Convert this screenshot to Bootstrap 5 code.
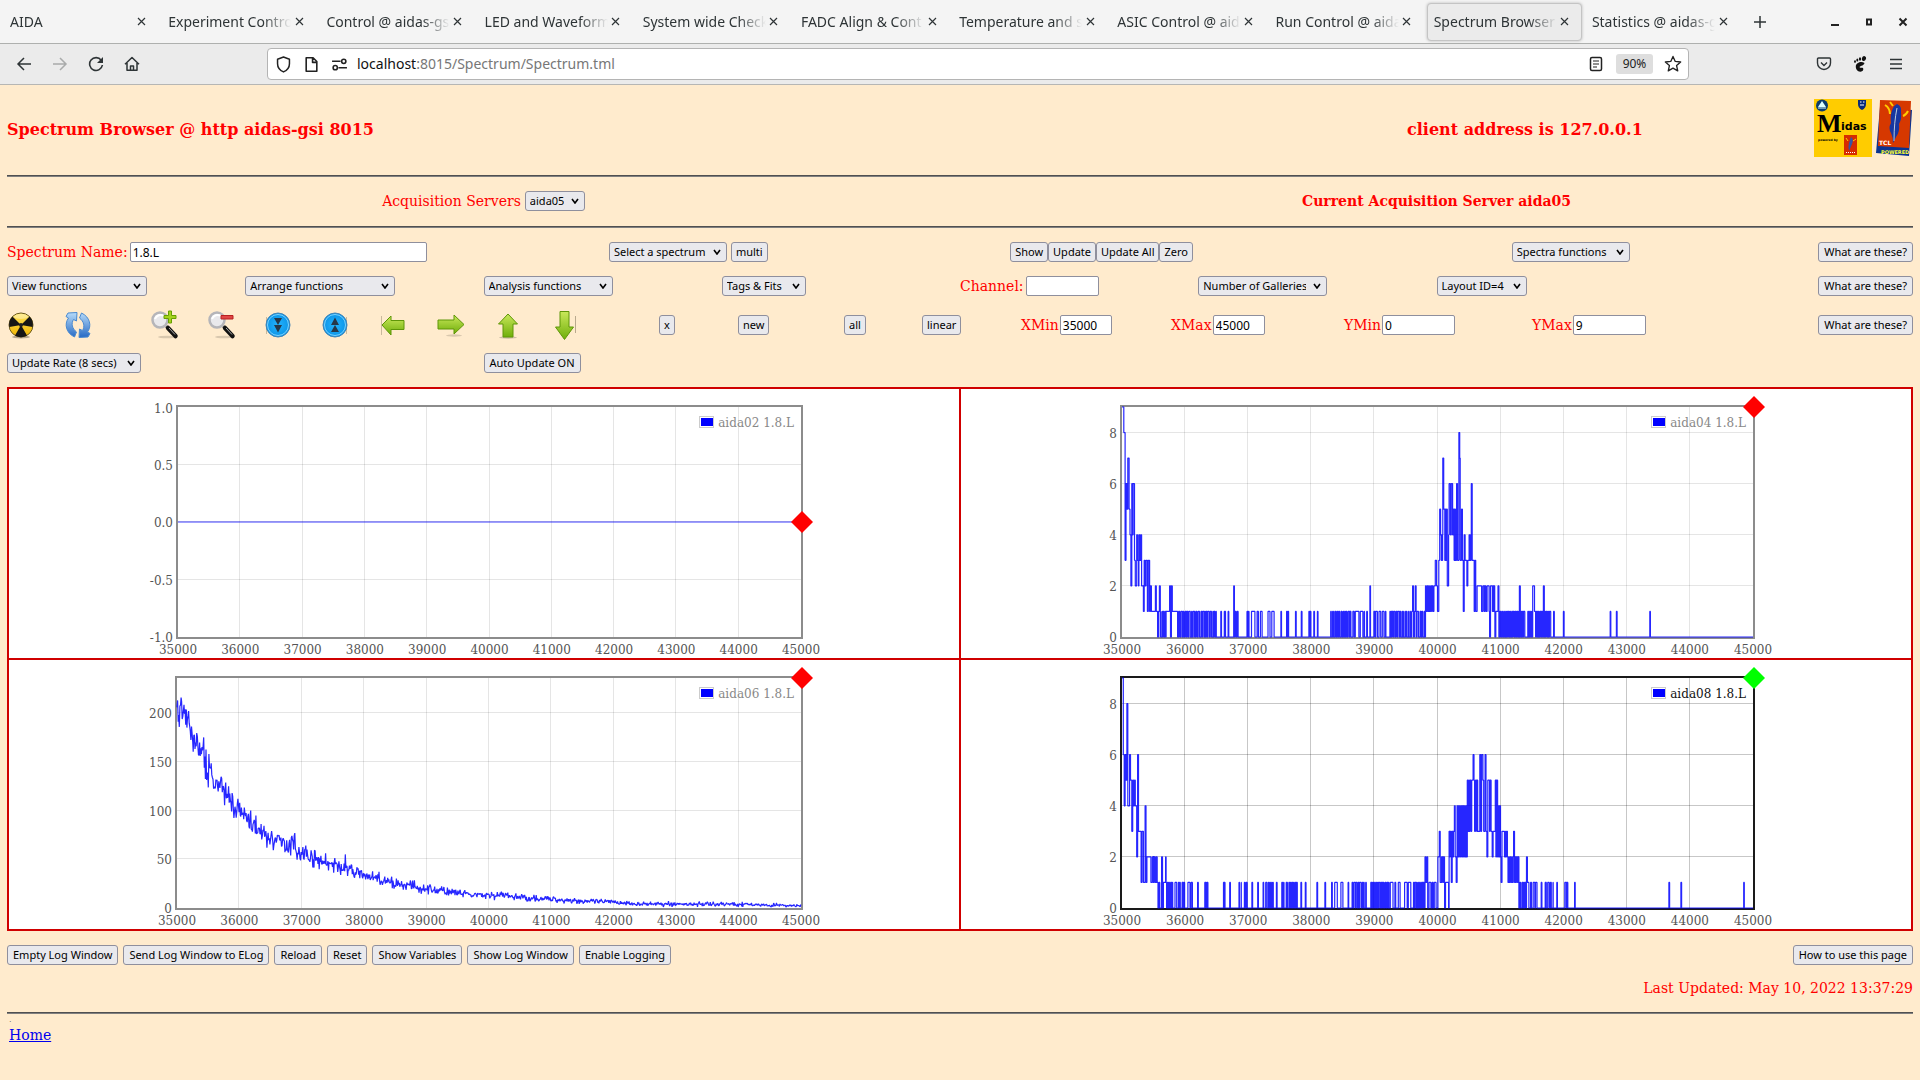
<!DOCTYPE html>
<html lang="en">
<head>
<meta charset="utf-8">
<meta name="viewport" content="width=device-width, initial-scale=1">
<title>Spectrum Browser @ aidas-gsi</title>
<link href="https://cdn.jsdelivr.net/npm/bootstrap@5.3.0/dist/css/bootstrap.min.css" rel="stylesheet">
<style>
  :root { --ui: "Noto Sans", "Open Sans", sans-serif; --serif: "DejaVu Serif", serif; }
  body { background: #ffebcd; font-family: var(--serif); font-size: 14px; line-height: 20px; color: #f00; min-height: 100vh; }
  button, select, input { font-family: var(--ui); }

  /* browser chrome */
  .tabstrip { height: 44px; background: #f4f4f4; border-bottom: 1px solid #aeb0ae; color: #2e3436; font: 14px/20px var(--ui); }
  .tabs-area { flex: 0 1 1740px; min-width: 0; }
  .btab { flex: 1 1 0; min-width: 0; height: 38px; margin: 0 0 0 3px; padding: 0 8px 0 6px; border: 1px solid transparent; border-radius: 4px; }
  .btab.current { background: #ebebeb; border-color: #c4c4c4; box-shadow: 0 0 3px rgba(0,0,0,.25); }
  .btab-text { flex: 1 1 0; min-width: 0; overflow: hidden; white-space: nowrap; -webkit-mask-image: linear-gradient(to left, transparent, #000 28px); mask-image: linear-gradient(to left, transparent, #000 28px); }
  .bare { background: none; border: 0; padding: 0; color: inherit; display: inline-flex; align-items: center; justify-content: center; }
  .bare svg { display: block; }
  .close-x { width: 16px; height: 20px; flex: none; }
  .win-btn { width: 18px; height: 20px; } .new-tab { width: 24px; height: 24px; } .url-btn { width: 24px; height: 24px; }
  .toolbar { height: 41px; background: #ebebeb; border-bottom: 1px solid #b6b6b4; color: #2e3436; }
  .nav-area { width: 267px; padding-left: 14px; gap: 16px; }
  .nav-area .bare, .ext-area .bare { width: 20px; height: 20px; }
  .urlbox { flex: 1 1 0; min-width: 0; height: 32px; background: #fff; border: 1px solid #b4b4b4; border-radius: 4px; padding: 0 3px 0 7px; }
  .url-icons { gap: 11px; margin-right: 9px; }
  .url-field { position: relative; flex: 1 1 0; min-width: 0; font: 14px/20px var(--ui); color: #777; white-space: nowrap; overflow: hidden; }
  .url-field b { font-weight: 400; color: #111; }
  .zoom-level { background: #dedede; border: 0; border-radius: 3px; font-size: 12px; line-height: 20px; width: 37px; padding: 0; color: #222; text-align: center; }
  .ext-area { width: 231px; padding-right: 14px; gap: 16px; }

  /* page */
  .page-body { padding: 0 7px; }
  .page-body hr { margin: 0; border: 0; height: 2px; opacity: 1; background: linear-gradient(#505050 50%, #808080 50%); }
  .head { height: 90px; display: grid; grid-template-columns: 1400fr 406fr 100fr; align-items: center; }
  .head h3 { font-size: 16px; line-height: 20px; font-weight: 700; margin: 0; }
  .logos { padding-bottom: 4px; }
  .servers { height: 49px; padding-bottom: 2px; }
  .panel-rows { display: flex; flex-direction: column; gap: 14px; padding-top: 14px; }
  .line { display: grid; align-items: center; min-height: 20px; }
  .line > * { display: flex; align-items: center; white-space: nowrap; min-width: 0; }
  .line > :last-child.end { justify-content: flex-end; }
  .line label { padding-right: 2px; }
  .line-a { grid-template-columns: 6fr 4fr 5fr 3fr 1fr; }
  .line-b { grid-template-columns: repeat(8, 1fr); }
  .line-c { height: 29px; grid-template-columns: 57fr 87fr 57fr 56fr 57fr 58fr 58fr 57fr 57fr 108fr 79fr 106fr 78fr 99fr 150fr 173fr 188fr 286fr 95fr; }
  .line-c label { padding-right: 1px; }
  .btn.ctl, .form-select.ctl, .form-control.ctl { height: 20px; font: 11px/18px var(--ui); color: #000; border: 1px solid #8f8f9d; border-radius: 3px; padding: 0 4px; background-color: #e9e9ed; }
  .btn.ctl.roomy { padding: 0 5px; }
  .form-select.ctl { width: auto; padding-right: 20px; background-repeat: no-repeat; background-position: right 5px center; background-size: 8px 6px;
    background-image: url("data:image/svg+xml,%3csvg xmlns='http://www.w3.org/2000/svg' viewBox='0 0 8 6'%3e%3cpath d='M1 1l3 4 3-4' fill='none' stroke='%23000' stroke-width='1.6'/%3e%3c/svg%3e"); }
  .form-control.ctl { background: #fff; border-radius: 2px; padding: 0 2px; font-size: 12px; }
  .w-name { width: 297px !important; } .w-num { width: 73px !important; } .w-chan { width: 52px !important; }
  .form-select.s60 { width: 60px; } .form-select.s83 { width: 84px; } .form-select.s90 { width: 90px; } .form-select.s117 { width: 118px; }
  .form-select.s130 { width: 129px; } .form-select.s135 { width: 134px; } .form-select.s140 { width: 140px; } .form-select.s150 { width: 150px; }
  .tool svg { width: 30px; height: 30px; display: block; }
  .tool { margin-left: -1px; }
  .btn-line { gap: 5px; }

  .gallery { display: grid; grid-template-columns: 1fr 1fr; gap: 2px; padding: 2px; background: #d00000; border: 0; }
  .plot { background: #fff; height: 269px; min-width: 0; overflow: hidden; }
  .plot svg { display: block; width: 100%; height: 269px; font-family: var(--serif); font-size: 12px; }
  .stamp { height: 47px; padding-bottom: 2px; }
  .foot { font-size: 14px; padding-left: 2px; }
  .foot small { font-size: 8px; line-height: 11px; display: block; color: #555; height: 11px; }
  .foot a { color: #00e; }
</style>
</head>
<body>

<header>
  <div class="tabstrip d-flex align-items-center">
    <div class="tabs-area d-flex" id="tabs"></div>
    <button class="bare new-tab ms-2" aria-label="New tab"><svg width="14" height="14" viewBox="0 0 14 14"><path d="M7 1v12M1 7h12" stroke="currentColor" stroke-width="1.5"/></svg></button>
    <div class="d-flex ms-auto pe-2 gap-3">
      <button class="bare win-btn" aria-label="Minimize"><svg width="10" height="10" viewBox="0 0 10 10"><path d="M1 8h8" stroke="#222" stroke-width="2"/></svg></button>
      <button class="bare win-btn" aria-label="Restore"><svg width="10" height="10" viewBox="0 0 10 10"><path d="M3 2.500h4v5H3z" fill="none" stroke="#222" stroke-width="2"/></svg></button>
      <button class="bare win-btn" aria-label="Close window"><svg width="10" height="10" viewBox="0 0 10 10"><path d="M1.500 1.500l7 7M8.500 1.500l-7 7" stroke="#222" stroke-width="2"/></svg></button>
    </div>
  </div>
  <div class="toolbar d-flex align-items-center">
    <div class="nav-area d-flex">
      <button class="bare" aria-label="Back"><svg width="16" height="16" viewBox="0 0 16 16"><path d="M15 8H2M8 2L2 8l6 6" fill="none" stroke="#2e3436" stroke-width="1.5"/></svg></button>
      <button class="bare" aria-label="Forward"><svg width="16" height="16" viewBox="0 0 16 16"><path d="M1 8h13M8 2l6 6-6 6" fill="none" stroke="#a9abab" stroke-width="1.500"/></svg></button>
      <button class="bare" aria-label="Reload"><svg width="16" height="16" viewBox="0 0 16 16"><path d="M13.200 4.200A6.400 6.400 0 1 0 14.400 9" fill="none" stroke="#2e3436" stroke-width="1.600"/><path d="M15 1v6H9z" fill="#2e3436"/></svg></button>
      <button class="bare" aria-label="Home"><svg width="16" height="16" viewBox="0 0 16 16"><path d="M1 8.300L8 1.500l7 6.800M3 7v7.300h10V7M6.500 14v-4h3v4" fill="none" stroke="#2e3436" stroke-width="1.500" stroke-linejoin="round"/></svg></button>
    </div>
    <div class="urlbox d-flex align-items-center">
      <div class="url-icons d-flex">
        <svg width="17" height="17" viewBox="0 0 16 16"><path d="M8 1l5.600 2v4.200c0 3.800-2.400 6.300-5.600 7.800-3.200-1.500-5.600-4-5.600-7.800V3z" fill="none" stroke="#222" stroke-width="1.400" stroke-linejoin="round"/></svg>
        <svg width="17" height="17" viewBox="0 0 16 16"><path d="M3 1.700h6.500L13 5.200v9.100H3zM9 2v4h4" fill="none" stroke="#222" stroke-width="1.500" stroke-linejoin="round"/></svg>
        <svg width="17" height="17" viewBox="0 0 16 16" fill="none" stroke="#222" stroke-width="1.500"><path d="M1 5h8M7 11h8"/><circle cx="12" cy="5" r="2"/><circle cx="4" cy="11" r="2"/></svg>
      </div>
      <div class="url-field"><b>localhost</b>:8015/Spectrum/Spectrum.tml</div>
      <div class="d-flex align-items-center gap-2">
        <button class="bare url-btn" aria-label="Reader view"><svg width="16" height="16" viewBox="0 0 16 16"><rect x="2.500" y="1.500" width="11" height="13" rx="1.500" fill="none" stroke="#222" stroke-width="1.500"/><path d="M5 5h6M5 8h6M5 11h4" stroke="#222" stroke-width="1.200"/></svg></button>
        <button class="zoom-level">90%</button>
        <button class="bare url-btn" aria-label="Bookmark"><svg width="18" height="18" viewBox="0 0 16 16"><path d="M8 1.300l2 4.400 4.800.5-3.600 3.200 1 4.700L8 11.700l-4.200 2.400 1-4.700L1.200 6.200 6 5.700z" fill="none" stroke="#222" stroke-width="1.200" stroke-linejoin="round"/></svg></button>
      </div>
    </div>
    <div class="ext-area d-flex justify-content-end">
      <button class="bare" aria-label="Pocket"><svg width="16" height="16" viewBox="0 0 16 16" fill="none" stroke="#2e3436" stroke-width="1.400"><path d="M2.500 2h11q1 0 1 1v4a6.500 6.500 0 0 1-13 0V3q0-1 1-1z"/><path d="M5 6.500l3 3 3-3"/></svg></button>
      <button class="bare" aria-label="GNOME shell integration"><svg width="16" height="16" viewBox="0 0 16 16" fill="#111"><ellipse cx="11.800" cy="2.600" rx="2" ry="2.500" transform="rotate(20 12 3)"/><ellipse cx="8" cy="3" rx="1.100" ry="1.700"/><ellipse cx="5.300" cy="4" rx="1" ry="1.500"/><ellipse cx="3" cy="5.600" rx=".9" ry="1.300"/><path d="M12.500 7C9.500 4.800 4 6.500 3.800 10.300c-.2 3 2 5.600 4.700 5.400 2.400-.2 3.300-2.300 2.600-3.500-.8-1.200-2.300.2-3.300-.8C6.600 10 12 10.200 12.500 7z"/></svg></button>
      <button class="bare" aria-label="Menu"><svg width="16" height="16" viewBox="0 0 16 16"><path d="M2 3.500h12M2 8h12M2 12.500h12" stroke="#2e3436" stroke-width="1.400"/></svg></button>
    </div>
  </div>
</header>

<main class="page-body">
  <div class="head">
    <h3>Spectrum Browser @ http aidas-gsi 8015</h3>
    <h3>client address is 127.0.0.1</h3>
    <div class="logos d-flex justify-content-end gap-1">
      <svg width="58" height="58" viewBox="0 0 58 58" role="img" aria-label="Midas">
        <rect width="58" height="58" fill="#fc0"/>
        <circle cx="8" cy="6.500" r="6" fill="#0b3c6f"/><path d="M4 8l4-6 4 6z" fill="#dff"/><path d="M4 9h8" stroke="#dff"/>
        <path d="M44 1h8v4q0 4-4 6-4-2-4-6z" fill="#0a2a7a"/><path d="M46 3h1.500M49 3h1.500M46 6h4" stroke="#fff"/>
        <text x="3" y="33" font-family="Liberation Serif, serif" font-weight="700" font-size="26" fill="#000">M</text>
        <text x="27" y="31" font-family="DejaVu Sans, sans-serif" font-weight="700" font-size="11" fill="#000">idas</text>
        <text x="4" y="42" font-family="DejaVu Sans, sans-serif" font-weight="700" font-size="3" fill="#000">powered by</text>
        <rect x="30" y="36" width="13" height="20" fill="#d62c00"/><path d="M37 38q3 2 1 7l-3 7q-1-4 0-8z" fill="#3555a5"/><path d="M32 39l2 3M39 42l3-2" stroke="#fc0"/>
        <path d="M32 53.500h9" stroke="#fff" stroke-dasharray="1 1"/>
      </svg>
      <svg width="37" height="58" viewBox="0 0 37 58" role="img" aria-label="Tcl powered">
        <path d="M4 8L36 11l-3 46L0 54z" fill="#0a3390"/>
        <path d="M4 1l31 1-2 47-31-2z" fill="#d63800"/>
        <path d="M21 5q5 2 4 8 1 7-2 12 1 8-3 13l-3 6q0-6-2-10-3-5 0-10-1-8 1-12 1-5 5-7z" fill="#1737a0"/>
        <path d="M21 9q-3 14-3 33" stroke="#bcd" fill="none"/>
        <path d="M9 6q5 3 5 9M27 17q3-1 5-5M14 3l3 4" stroke="#fc0" stroke-width="2" fill="none"/>
        <text x="3" y="46" font-family="DejaVu Sans, sans-serif" font-weight="700" font-size="6" fill="#fff">TCL</text>
        <text x="5" y="55" font-family="DejaVu Sans, sans-serif" font-weight="700" font-size="5" fill="#ff3">POWERED</text>
      </svg>
    </div>
  </div>
  <hr>
  <div class="servers row g-0 align-items-center text-center">
    <div class="col d-flex justify-content-center align-items-center gap-1"><label for="srv">Acquisition Servers</label><select id="srv" class="form-select ctl s60"><option>aida05</option></select></div>
    <div class="col fw-bold">Current Acquisition Server aida05</div>
  </div>
  <hr>
  <div class="panel-rows">
    <div class="line line-a">
      <div><label for="spn">Spectrum Name:</label><input id="spn" class="form-control ctl w-name" value="1.8.L"></div>
      <div class="gap-1"><select class="form-select ctl s117" aria-label="Select a spectrum"><option>Select a spectrum</option></select><button class="btn ctl">multi</button></div>
      <div><button class="btn ctl">Show</button><button class="btn ctl">Update</button><button class="btn ctl">Update All</button><button class="btn ctl">Zero</button></div>
      <div><select class="form-select ctl s117" aria-label="Spectra functions"><option>Spectra functions</option></select></div>
      <div class="end"><button class="btn ctl roomy">What are these?</button></div>
    </div>
    <div class="line line-b">
      <div><select class="form-select ctl s140" aria-label="View functions"><option>View functions</option></select></div>
      <div><select class="form-select ctl s150" aria-label="Arrange functions"><option>Arrange functions</option></select></div>
      <div><select class="form-select ctl s130" aria-label="Analysis functions"><option>Analysis functions</option></select></div>
      <div><select class="form-select ctl s83" aria-label="Tags and fits"><option>Tags &amp; Fits</option></select></div>
      <div><label for="chn">Channel:</label><input id="chn" class="form-control ctl w-num"></div>
      <div><select class="form-select ctl s130" aria-label="Number of Galleries"><option>Number of Galleries</option></select></div>
      <div><select class="form-select ctl s90" aria-label="Layout"><option>Layout ID=4</option></select></div>
      <div class="end"><button class="btn ctl roomy">What are these?</button></div>
    </div>
    <div class="line line-c">
      <div><button class="bare tool" aria-label="Radiation"><svg viewBox="0 0 30 30"><defs>
        <linearGradient id="gy" x2="0" y2="1"><stop stop-color="#ffe45c"/><stop offset="1" stop-color="#f0b400"/></linearGradient>
        <linearGradient id="gb" x2="0" y2="1"><stop stop-color="#b8dcfa"/><stop offset="1" stop-color="#2569c4"/></linearGradient>
        <linearGradient id="gg" x2="0" y2="1"><stop stop-color="#c9e85a"/><stop offset="1" stop-color="#6fae0a"/></linearGradient>
        <radialGradient id="gc"><stop stop-color="#25b4ff"/><stop offset="1" stop-color="#0a93e6"/></radialGradient></defs>
        <ellipse cx="15" cy="27" rx="9" ry="1.500" fill="#000" opacity=".3"/><circle cx="15" cy="15" r="12" fill="url(#gy)" stroke="#6b5a1f"/>
        <path d="M15 15L3.300 17A12 12 0 0 1 6.500 6.500zM15 15l11.700 2A12 12 0 0 0 23.500 6.500zM15 15l-6 10.400a12 12 0 0 0 12 0z" fill="#161616"/><path d="M7 7a11.500 11.500 0 0 1 16 0q-8 4-16 0z" fill="#fff" opacity=".35"/><circle cx="15" cy="15" r="2" fill="#222"/></svg></button></div>
      <div><button class="bare tool" aria-label="Refresh"><svg viewBox="0 0 30 30"><path d="M11.500 27C3 23 1 14 5.500 8L3 6.500 5 3l9-.5L13.500 11 10.500 9.500c-2.500 4-1.500 9 3 12.500zM18.500 3c8.500 4 10.500 13 6 19l2.500 1.500-2 3.500-9 .5.500-8.500 3 1.500c2.500-4 1.500-9-3-12.500z" fill="url(#gb)" stroke="#4a8ad0"/></svg></button></div>
      <div><button class="bare tool" aria-label="Zoom in"><svg viewBox="0 0 30 30"><ellipse cx="17" cy="27" rx="9" ry="1.300" opacity=".15"/><path d="M16 16l3 3" stroke="#999" stroke-width="3"/><path d="M18 18l7.500 8" stroke="#111" stroke-width="4.500" stroke-linecap="round"/><path d="M19 18l6 6.500" stroke="#aaa"/><circle cx="10" cy="10" r="7.500" fill="#e9e9ec" stroke="#b5b5b9" stroke-width="2.500"/><path d="M5 9a6 6 0 0 1 9-3" stroke="#fff" stroke-width="2" fill="none"/><path d="M18.500 1h3v4.500H26v3h-4.500V13h-3V8.500H14v-3h4.500z" fill="#a5d31d" stroke="#679f00"/></svg></button></div>
      <div><button class="bare tool" aria-label="Zoom out"><svg viewBox="0 0 30 30"><ellipse cx="17" cy="27" rx="9" ry="1.300" opacity=".15"/><path d="M16 16l3 3" stroke="#999" stroke-width="3"/><path d="M18 18l7.500 8" stroke="#111" stroke-width="4.500" stroke-linecap="round"/><path d="M19 18l6 6.500" stroke="#aaa"/><circle cx="10" cy="10" r="7.500" fill="#e9e9ec" stroke="#b5b5b9" stroke-width="2.500"/><path d="M5 9a6 6 0 0 1 9-3" stroke="#fff" stroke-width="2" fill="none"/><path d="M14 5.500h12v3.500H14z" fill="#e04545" stroke="#b82020"/></svg></button></div>
      <div><button class="bare tool" aria-label="Scale down"><svg viewBox="0 0 30 30"><path d="M3.500 7v17" stroke="#c9b99d"/><circle cx="15" cy="15" r="12" fill="url(#gc)" stroke="#4685b5"/><circle cx="15" cy="15" r="10.500" fill="none" stroke="#7cd3ff"/><path d="M11 8h8l-4 7zM11 15h8l-4 7.500z" fill="#26384a"/></svg></button></div>
      <div><button class="bare tool" aria-label="Scale up"><svg viewBox="0 0 30 30"><path d="M26.500 7v17" stroke="#c9b99d"/><circle cx="15" cy="15" r="12" fill="url(#gc)" stroke="#4685b5"/><circle cx="15" cy="15" r="10.500" fill="none" stroke="#7cd3ff"/><path d="M11 15h8l-4-7.500zM11 22h8l-4-7z" fill="#26384a"/></svg></button></div>
      <div><button class="bare tool" aria-label="Left"><svg viewBox="0 0 30 30"><path d="M3.500 6v19" stroke="#c9b99d"/><path d="M4 15l9-9v4.500h13v9H13V25z" fill="url(#gg)" stroke="#5f9608"/></svg></button></div>
      <div><button class="bare tool" aria-label="Right"><svg viewBox="0 0 30 30"><ellipse cx="18" cy="25.500" rx="8" ry="1.200" opacity=".15"/><path d="M28 14.500L18 5v5H2v9h16v5z" fill="url(#gg)" stroke="#5f9608"/></svg></button></div>
      <div><button class="bare tool" aria-label="Up"><svg viewBox="0 0 30 30"><ellipse cx="15" cy="27.500" rx="9" ry="1.200" opacity=".2"/><path d="M15 4l9.500 10H20v13H10V14H5.500z" fill="url(#gg)" stroke="#5f9608"/></svg></button></div>
      <div><button class="bare tool" aria-label="Down"><svg viewBox="0 0 30 30"><path d="M25.500 6v17" stroke="#b9a98d"/><path d="M14.500 29.500L23.500 17H19V1.500h-9V17H5.500z" fill="url(#gg)" stroke="#5f9608"/></svg></button></div>
      <div><button class="btn ctl">x</button></div>
      <div><button class="btn ctl">new</button></div>
      <div><button class="btn ctl">all</button></div>
      <div><button class="btn ctl">linear</button></div>
      <div><label for="xmin">XMin</label><input id="xmin" class="form-control ctl w-chan" value="35000"></div>
      <div><label for="xmax">XMax</label><input id="xmax" class="form-control ctl w-chan" value="45000"></div>
      <div><label for="ymin">YMin</label><input id="ymin" class="form-control ctl w-num" value="0"></div>
      <div><label for="ymax">YMax</label><input id="ymax" class="form-control ctl w-num" value="9"></div>
      <div class="end"><button class="btn ctl roomy">What are these?</button></div>
    </div>
    <div class="line line-b">
      <div><select class="form-select ctl s135" aria-label="Update rate"><option>Update Rate (8 secs)</option></select></div>
      <div></div>
      <div><button class="btn ctl roomy">Auto Update ON</button></div>
    </div>
    <div class="gallery">
      <div class="plot" data-plot="0"></div><div class="plot" data-plot="1"></div>
      <div class="plot" data-plot="2"></div><div class="plot" data-plot="3"></div>
    </div>
    <div class="btn-line d-flex">
      <button class="btn ctl roomy">Empty Log Window</button><button class="btn ctl roomy">Send Log Window to ELog</button><button class="btn ctl roomy">Reload</button><button class="btn ctl roomy">Reset</button><button class="btn ctl roomy">Show Variables</button><button class="btn ctl roomy">Show Log Window</button><button class="btn ctl roomy">Enable Logging</button>
      <button class="btn ctl roomy ms-auto">How to use this page</button>
    </div>
  </div>
  <div class="stamp d-flex align-items-center justify-content-end">Last Updated: May 10, 2022 13:37:29</div>
  <hr>
  <div class="foot"><small>.</small><a href="#">Home</a></div>
</main>

<script>
const titles = ["AIDA", "Experiment Control", "Control @ aidas-gs", "LED and Waveform", "System wide Check", "FADC Align & Cont", "Temperature and st", "ASIC Control @ aid", "Run Control @ aida", "Spectrum Browser", "Statistics @ aidas-g"];
document.getElementById("tabs").innerHTML = titles.map((t, i) =>
  `<div class="btab d-flex align-items-center${i === 9 ? " current" : ""}"><span class="btab-text">${t.replace("&", "&amp;")}</span><button class="bare close-x" aria-label="Close tab"><svg width="9" height="9" viewBox="0 0 9 9"><path d="M1 1l7 7M8 1l-7 7" stroke="#2e3436" stroke-width="1.200"/></svg></button></div>`).join("");

let seed = 7;
const rnd = () => (seed = (seed * 16807) % 2147483647) / 2147483647;

/* Histogram runs. "x:v" steps to v counts at x; "a-b:lo,hi,p" alternates between lo and hi about every p units.
   "x^v" is a single spike of v. One unit is 1/1418 of the x range. */
const runs1 = "0:9 4:8 7:3 9:6 11:5 13:7 16:5 18:4 20:2 22:6 24:4 25:6 28:3 30:2 33:4 35:3 37:2 38:4 40:3 42:4 44:2 48:1 50:3 52:2 54:3 57:1 59:3 62:1 64:2 66:1 75:2 77:1 80:0 82:1 84:2 86:0 86-99:0,1,2 99:1 107:2 109:0 111:2 113:1 122-212:0,1,2.2 222^1 230-240:0,1,4 251^2 254-261:0,1,3 281^1 284^1 291-316:0,1,5 328-346:0,1,5 357^1 370^1 373^1 390^1 403^1 420^1 423^1 431^1 439^1 469-512:0,1,2 512-545:0,1,5 550^1 557^2 566-593:0,1,2.5 602-650:0,1,2.2 651:1 653:2 655:0 657:1 659:2 661:0 663-682:0,1,3 682-703:1,2,1.5 704:3 707:2 709:1 712:3 714:5 716-721:3,4,1 721:7 723-731:3,5,1.6 731:2 734:4 735:6 738:4 740:6 743:4 745-752:3,5,1.3 752:6 754:3 757:8 759:7 760:3 763:5 765:3 767:1 769:4 771:3 775:2 777:3 780-785:3,4,1.2 785:6 787:3 790-795:1,3,1.2 796:1 798:2 808:1 811-823:1,2,2.5 825:1 826:0 828:2 830-838:1,2,1.6 838:0 840:1 845:2 847:0 849-880:0,1,2 880-895:0,1,1.2 893:2 895-906:0,1,2.5 912-922:0,1,2 923:2 927:1 928-946:0,1,1.5 947:2 949:0 950-964:0,1,2.5 970^1 992^1 1097^1 1111^1 1186^1";
const runs3 = "0:9 3:6 5:4 7:6 9:5 11:8 13:4 17:6 19:5 22:3 24:5 26:4 28:5 30:4 33:2 35:6 37:3 43:1 45:3 48:1 52:4 54:1 56:2 65:1 68-79:1,2,1.5 79:1 81:0 83:1 85:0 89:2 91:0 93:1 98:2 99-114:0,1,1.6 119-131:0,1,2.5 135-142:0,1,2 148-162:0,1,3 170^1 186-194:0,1,2 228^1 230^1 242^1 263-268:0,1,2.5 275-283:0,1,2.500 292^1 305^1 317^1 323-340:0,1,2 347^1 359-364:0,1,2 369-373:0,1,2 375-394:0,1,1.8 402^1 412^1 438^1 456^1 471^1 478-487:0,1,4 492-500:0,1,3 508^1 517-549:0,1,2.2 559-600:0,1,1.8 603-615:0,1,4 621-627:0,1,3 635-649:0,1,4 655-681:0,1,1.8 681:2 683:1 685:2 687:0 690-709:0,1,5 710:2 713:3 715:1 718-725:1,2,1.4 725:0 727:1 734:0 735-746:2,3,1.2 740:1 742:3 747-751:2,4,1.5 751:1 753-767:2,4,1.6 767-776:2,4,1.1 776-787:3,5,1.4 789:6 791-801:3,5,1.8 804:6 806:3 808:6 811-814:3,5,1.5 816:6 818:3 820:2 822:5 824-831:3,5,2 832:2 834:3 839-844:2,5,1.4 844-851:2,4,1.4 852:1 854:3 857-865:2,3,1.6 866-880:1,2,1.4 880:3 882:1 884-893:1,2,1.8 891-909:0,1,2 909:2 911-934:0,1,2.5 942^1 951-969:0,1,2.5 977^1 995-1003:0,1,2 1017^1 1229^1 1256^1 1397^1";

function histogram(src) {
  const pts = [];
  for (const r of src.split(" ")) {
    let m;
    if (m = r.match(/^(\d+)\^(\d)$/)) pts.push([+m[1], 0], [+m[1], +m[2]], [+m[1] + 1.5, 0]);
    else if (m = r.match(/^(\d+)-(\d+):(\d),(\d),([\d.]+)$/)) {
      let x = +m[1], up = true;
      while (x < +m[2]) { pts.push([x, up ? +m[4] : +m[3]]); up = !up; x += m[5] * (0.4 + rnd() * 1.2); }
      if (m[3] === "0") pts.push([+m[2], 0]);
    }
    else { m = r.split(":"); pts.push([+m[0], +m[1]]); }
  }
  return pts.map(p => [35000 + p[0] / 1418 * 10000, p[1]]);
}

function decay() {
  const c = [[35000,205],[35100,195],[35180,187],[35250,175],[35330,168],[35400,155],[35500,141],[35650,127],[35800,115],[36000,98],[36250,82],[36500,72],[36750,65],[37000,56],[37250,50],[37500,44],[37750,39],[38000,34],[38250,28],[38500,25],[39000,20],[39500,15],[39750,13],[40200,13],[40500,11],[41000,9],[41500,7],[42000,6],[42500,4],[43000,4],[44000,4],[44500,3],[45000,2]];
  const peaks = {1: 213, 3: 198, 7: 216, 20: 202, 46: 175, 55: 158, 89: 125, 95: 118, 105: 112, 116: 103, 127: 100, 136: 95, 155: 62, 196: 54, 202: 74, 197: 72, 201: 60, 198: 74, 199: 70, 196: 54, 195: 60, 197: 72, 194: 70, 200: 68, 203: 77, 222: 64, 290: 55, 348: 37, 675: 9};
  const out = []; let k = 0;
  for (let i = 0; i <= 1080; i++) {
    const x = 35000 + i * 9.3;
    if (x > 45000) break;
    while (c[k + 1] && c[k + 1][0] < x) k++;
    const a = c[k], b = c[k + 1] || a, v = a[1] + (b[1] - a[1]) * ((x - a[0]) / ((b[0] - a[0]) || 1));
    out.push([x, peaks[i] || Math.max(1, v + (rnd() + rnd() + rnd() - 1.5) * Math.sqrt(v) * 1.1)]);
  }
  return out;
}

const plots = [
  { name: "aida02 1.8.L", left: 168, min: -1, max: 1, ticks: ["1.0", "0.5", "0.0", "-0.5", "-1.0"], data: [[35000, 0], [45000, 0]], mark: "#f00", my: 133, dim: true, alpha: .38, width: 2 },
  { name: "aida04 1.8.L", left: 160, min: 0, max: 9, ticks: ["8", "6", "4", "2", "0"], data: histogram(runs1), step: true, mark: "#f00", my: 18, dim: true },
  { name: "aida06 1.8.L", left: 167, min: 0, max: 236, ticks: ["200", "150", "100", "50", "0"], data: decay(), mark: "#f00", my: 18, dim: true },
  { name: "aida08 1.8.L", left: 160, min: 0, max: 9, ticks: ["8", "6", "4", "2", "0"], data: histogram(runs3), step: true, mark: "#0f0", my: 18, dim: false }
];

function draw() {
  document.querySelectorAll("[data-plot]").forEach(el => {
    const p = plots[el.dataset.plot], L = p.left, R = el.clientWidth - 157, T = 17, B = 249;
    const X = v => L + 1 + (v - 35000) / 10000 * (R - L - 2), Y = v => B - 1 - (v - p.min) / (p.max - p.min) * (B - T - 2);
    let s = "", grid = "";
    for (let v = 36000; v < 45000; v += 1000) grid += `M${Math.round(X(v)) - .5} ${T}V${B}`;
    for (const t of p.ticks) if (+t > p.min && +t < p.max) grid += `M${L} ${Math.round(Y(+t)) - .5}H${R}`;
    s += `<path d="${grid}" stroke="#000" stroke-opacity="${p.dim ? .1 : .22}" stroke-width="1" fill="none"/>`;
    s += `<rect x="${L}" y="${T}" width="${R - L}" height="${B - T}" fill="none" stroke="${p.dim ? "#8c8c8c" : "#1a1a1a"}" stroke-width="2"/>`;
    let d = "";
    p.data.forEach(([x, y], i) => { const px = X(x).toFixed(1), py = Y(y).toFixed(1); d += i ? (p.step ? `H${px}V${py}` : `L${px} ${py}`) : `M${px} ${py}`; });
    if (p.step) d += `H${R - 1}`;
    s += `<path d="${d}" fill="none" stroke="#00f" stroke-opacity="${p.alpha || .85}" stroke-width="${p.width || 1.2}" stroke-linejoin="bevel"/>`;
    for (let v = 35000; v <= 45000; v += 1000) s += `<text x="${X(v)}" y="265" text-anchor="middle" fill="#545454">${v}</text>`;
    for (const t of p.ticks) s += `<text x="${L - 4}" y="${Math.round(Math.max(Y(+t), T + 2)) + 5}" text-anchor="end" fill="#545454">${t}</text>`;
    s += `<rect x="${R - 102.5}" y="27.5" width="14" height="11" fill="#fff" stroke="#ccc"/><rect x="${R - 101}" y="29" width="12" height="8" fill="#00f"/>`;
    s += `<text x="${R - 8}" y="38" text-anchor="end" fill="${p.dim ? "#888" : "#111"}">${p.name}</text>`;
    s += `<path d="M${R} ${p.my - 11}l11 11-11 11-11-11z" fill="${p.mark}"/>`;
    el.innerHTML = `<svg role="img" aria-label="${p.name}">${s}</svg>`;
  });
}
draw();
addEventListener("resize", draw);
</script>
<script src="https://cdn.jsdelivr.net/npm/bootstrap@5.3.0/dist/js/bootstrap.bundle.min.js"></script>
</body>
</html>
